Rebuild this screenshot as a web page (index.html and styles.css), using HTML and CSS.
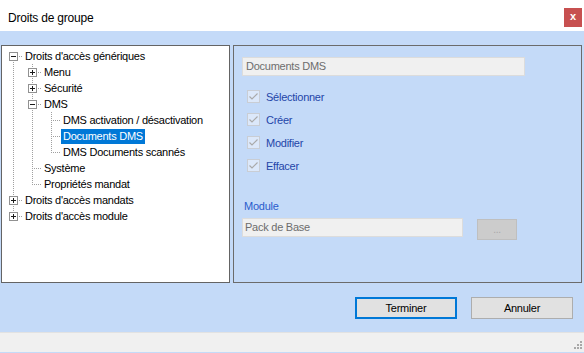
FILE: index.html
```
<!DOCTYPE html>
<html lang="fr">
<head>
<meta charset="utf-8">
<title>Droits de groupe</title>
<link rel="stylesheet" href="styles.css">
</head>
<body>
<div class="window">
  <div class="titlebar">
    <span class="title">Droits de groupe</span>
    <span class="close">x</span>
  </div>
  <div class="main">
    <div class="panels">
      <div class="tree">
        <div class="row">
          <svg class="cell" width="19" height="16"><line class="dot" x1="9.5" y1="12" x2="9.5" y2="16"/><line class="dot" x1="13" y1="8.5" x2="19" y2="8.5"/><rect class="box" x="5.5" y="4.5" width="8" height="8"/><line class="sign" x1="7" y1="8.5" x2="12" y2="8.5"/></svg>
          <span class="label">Droits d'accès génériques</span>
        </div>
        <div class="row">
          <svg class="cell" width="19" height="16"><line class="dot" x1="9.5" y1="0" x2="9.5" y2="16"/></svg>
          <svg class="cell" width="19" height="16"><line class="dot" x1="9.5" y1="0" x2="9.5" y2="4"/><line class="dot" x1="9.5" y1="12" x2="9.5" y2="16"/><line class="dot" x1="13" y1="8.5" x2="19" y2="8.5"/><rect class="box" x="5.5" y="4.5" width="8" height="8"/><line class="sign" x1="7" y1="8.5" x2="12" y2="8.5"/><line class="sign" x1="9.5" y1="6" x2="9.5" y2="11"/></svg>
          <span class="label">Menu</span>
        </div>
        <div class="row">
          <svg class="cell" width="19" height="16"><line class="dot" x1="9.5" y1="0" x2="9.5" y2="16"/></svg>
          <svg class="cell" width="19" height="16"><line class="dot" x1="9.5" y1="0" x2="9.5" y2="4"/><line class="dot" x1="9.5" y1="12" x2="9.5" y2="16"/><line class="dot" x1="13" y1="8.5" x2="19" y2="8.5"/><rect class="box" x="5.5" y="4.5" width="8" height="8"/><line class="sign" x1="7" y1="8.5" x2="12" y2="8.5"/><line class="sign" x1="9.5" y1="6" x2="9.5" y2="11"/></svg>
          <span class="label">Sécurité</span>
        </div>
        <div class="row">
          <svg class="cell" width="19" height="16"><line class="dot" x1="9.5" y1="0" x2="9.5" y2="16"/></svg>
          <svg class="cell" width="19" height="16"><line class="dot" x1="9.5" y1="0" x2="9.5" y2="4"/><line class="dot" x1="9.5" y1="12" x2="9.5" y2="16"/><line class="dot" x1="13" y1="8.5" x2="19" y2="8.5"/><rect class="box" x="5.5" y="4.5" width="8" height="8"/><line class="sign" x1="7" y1="8.5" x2="12" y2="8.5"/></svg>
          <span class="label">DMS</span>
        </div>
        <div class="row">
          <svg class="cell" width="19" height="16"><line class="dot" x1="9.5" y1="0" x2="9.5" y2="16"/></svg>
          <svg class="cell" width="19" height="16"><line class="dot" x1="9.5" y1="0" x2="9.5" y2="16"/></svg>
          <svg class="cell" width="19" height="16"><line class="dot" x1="9.5" y1="0" x2="9.5" y2="16"/><line class="dot" x1="11" y1="8.5" x2="19" y2="8.5"/></svg>
          <span class="label">DMS activation / désactivation</span>
        </div>
        <div class="row">
          <svg class="cell" width="19" height="16"><line class="dot" x1="9.5" y1="0" x2="9.5" y2="16"/></svg>
          <svg class="cell" width="19" height="16"><line class="dot" x1="9.5" y1="0" x2="9.5" y2="16"/></svg>
          <svg class="cell" width="19" height="16"><line class="dot" x1="9.5" y1="0" x2="9.5" y2="16"/><line class="dot" x1="11" y1="8.5" x2="19" y2="8.5"/></svg>
          <span class="label selected">Documents DMS</span>
        </div>
        <div class="row">
          <svg class="cell" width="19" height="16"><line class="dot" x1="9.5" y1="0" x2="9.5" y2="16"/></svg>
          <svg class="cell" width="19" height="16"><line class="dot" x1="9.5" y1="0" x2="9.5" y2="16"/></svg>
          <svg class="cell" width="19" height="16"><line class="dot" x1="9.5" y1="0" x2="9.5" y2="9"/><line class="dot" x1="11" y1="8.5" x2="19" y2="8.5"/></svg>
          <span class="label">DMS Documents scannés</span>
        </div>
        <div class="row">
          <svg class="cell" width="19" height="16"><line class="dot" x1="9.5" y1="0" x2="9.5" y2="16"/></svg>
          <svg class="cell" width="19" height="16"><line class="dot" x1="9.5" y1="0" x2="9.5" y2="16"/><line class="dot" x1="11" y1="8.5" x2="19" y2="8.5"/></svg>
          <span class="label">Système</span>
        </div>
        <div class="row">
          <svg class="cell" width="19" height="16"><line class="dot" x1="9.5" y1="0" x2="9.5" y2="16"/></svg>
          <svg class="cell" width="19" height="16"><line class="dot" x1="9.5" y1="0" x2="9.5" y2="9"/><line class="dot" x1="11" y1="8.5" x2="19" y2="8.5"/></svg>
          <span class="label">Propriétés mandat</span>
        </div>
        <div class="row">
          <svg class="cell" width="19" height="16"><line class="dot" x1="9.5" y1="0" x2="9.5" y2="4"/><line class="dot" x1="9.5" y1="12" x2="9.5" y2="16"/><line class="dot" x1="13" y1="8.5" x2="19" y2="8.5"/><rect class="box" x="5.5" y="4.5" width="8" height="8"/><line class="sign" x1="7" y1="8.5" x2="12" y2="8.5"/><line class="sign" x1="9.5" y1="6" x2="9.5" y2="11"/></svg>
          <span class="label">Droits d'accès mandats</span>
        </div>
        <div class="row">
          <svg class="cell" width="19" height="16"><line class="dot" x1="9.5" y1="0" x2="9.5" y2="4"/><line class="dot" x1="13" y1="8.5" x2="19" y2="8.5"/><rect class="box" x="5.5" y="4.5" width="8" height="8"/><line class="sign" x1="7" y1="8.5" x2="12" y2="8.5"/><line class="sign" x1="9.5" y1="6" x2="9.5" y2="11"/></svg>
          <span class="label">Droits d'accès module</span>
        </div>
      </div>
      <div class="detail">
        <div class="field wide">Documents DMS</div>
        <div class="checks">
          <div class="check"><svg class="cb" width="13" height="13"><rect x="0.5" y="0.5" width="12" height="12"/><polyline points="2.5,6.5 5,9 10.5,3.5"/></svg><span>Sélectionner</span></div>
          <div class="check"><svg class="cb" width="13" height="13"><rect x="0.5" y="0.5" width="12" height="12"/><polyline points="2.5,6.5 5,9 10.5,3.5"/></svg><span>Créer</span></div>
          <div class="check"><svg class="cb" width="13" height="13"><rect x="0.5" y="0.5" width="12" height="12"/><polyline points="2.5,6.5 5,9 10.5,3.5"/></svg><span>Modifier</span></div>
          <div class="check"><svg class="cb" width="13" height="13"><rect x="0.5" y="0.5" width="12" height="12"/><polyline points="2.5,6.5 5,9 10.5,3.5"/></svg><span>Effacer</span></div>
        </div>
        <div class="module-label">Module</div>
        <div class="module-row">
          <div class="field narrow">Pack de Base</div>
          <div class="dots-btn">...</div>
        </div>
      </div>
    </div>
    <div class="buttons">
      <div class="btn primary">Terminer</div>
      <div class="btn">Annuler</div>
    </div>
  </div>
  <div class="status">
    <svg class="grip" width="12" height="12"><rect x="9" y="1" width="2" height="2"/><rect x="6" y="4" width="2" height="2"/><rect x="9" y="4" width="2" height="2"/><rect x="3" y="7" width="2" height="2"/><rect x="6" y="7" width="2" height="2"/><rect x="9" y="7" width="2" height="2"/></svg>
  </div>
</div>
</body>
</html>
```
FILE: styles.css
```
* { box-sizing: border-box; }
html, body { margin: 0; padding: 0; }
body {
  width: 584px;
  height: 353px;
  overflow: hidden;
  background: #c4daf8;
  font-family: "Liberation Sans", Arial, sans-serif;
  font-size: 11px;
  letter-spacing: -0.25px;
  color: #000;
}
.window { width: 584px; height: 353px; display: flex; flex-direction: column; }
.titlebar {
  height: 31px;
  background: #fff;
  display: flex;
  align-items: center;
  padding-left: 8px;
  padding-right: 2px;
  padding-top: 4px;
}
.title { font-size: 12px; letter-spacing: -0.2px; color: #000; flex: 1; }
.close {
  width: 18px;
  height: 19px;
  background: #c75050;
  color: #fff;
  font-weight: bold;
  font-size: 11px;
  letter-spacing: 0;
  display: flex;
  align-items: center;
  justify-content: center;
  line-height: 1;
  padding-bottom: 2px;
}
.main {
  height: 301px;
  background: #c4daf8;
  padding: 14px 2px 0 1px;
}
.panels { display: flex; gap: 3px; height: 238px; }
.tree {
  width: 229px;
  background: #fff;
  border: 1px solid #646464;
  padding: 2px 0 0 2px;
}
.row { display: flex; align-items: center; height: 16px; }
.cell { display: block; flex: none; }
.dot { stroke: #a0a0a0; stroke-width: 1; stroke-dasharray: 1 1; shape-rendering: crispEdges; }
.box { fill: #fff; stroke: #919191; stroke-width: 1; shape-rendering: crispEdges; }
.sign { stroke: #1a1a1a; stroke-width: 1; shape-rendering: crispEdges; }
.label { padding: 0 2px; line-height: 15px; white-space: nowrap; margin-left: 1px; }
.row > .cell + .label { margin-left: 0; }
.selected { background: #0078d7; color: #fff; }
.detail {
  width: 349px;
  border: 1px solid #6b6b6b;
  padding: 11px 0 0 8px;
}
.field {
  height: 19px;
  background: #f0f0f0;
  border: 1px solid #dcdcdc;
  color: #6d6d6d;
  line-height: 17px;
  padding-left: 3px;
}
.wide { width: 283px; }
.narrow { width: 221px; padding-left: 2px; }
.checks { margin-top: 9px; display: flex; flex-direction: column; }
.check { height: 23px; display: flex; align-items: center; padding-left: 5px; color: #1f45a8; }
.check span { margin-left: 6px; }
.cb rect { fill: #dce8fa; stroke: #c9cdd4; stroke-width: 1; shape-rendering: crispEdges; }
.cb polyline { fill: none; stroke: #a9a9a9; stroke-width: 1.2; }
.module-label { margin-top: 21px; height: 16px; line-height: 16px; color: #2a5ccc; padding-left: 2px; }
.module-row { margin-top: 4px; display: flex; gap: 14px; align-items: flex-start; }
.dots-btn {
  width: 40px;
  height: 21px;
  margin-top: 1px;
  background: #cccccc;
  border: 1px solid #bfbfbf;
  color: #a8a8a8;
  text-align: center;
  line-height: 19px;
  font-size: 10px;
}
.buttons {
  display: flex;
  justify-content: flex-end;
  gap: 14px;
  padding-top: 14px;
  padding-right: 9px;
}
.btn {
  width: 102px;
  height: 22px;
  background: #e1e1e1;
  border: 1px solid #adadad;
  display: flex;
  align-items: center;
  justify-content: center;
}
.btn.primary { border: 2px solid #0078d7; }
.status {
  height: 21px;
  background: #f0f0f0;
  border-top: 1px solid #e2e2e2;
  border-bottom: 1px solid #c4daf8;
  display: flex;
  justify-content: flex-end;
  align-items: flex-end;
  padding-right: 1px;
}
.grip { display: block; }
.grip rect { fill: #a8a8a8; }
```
